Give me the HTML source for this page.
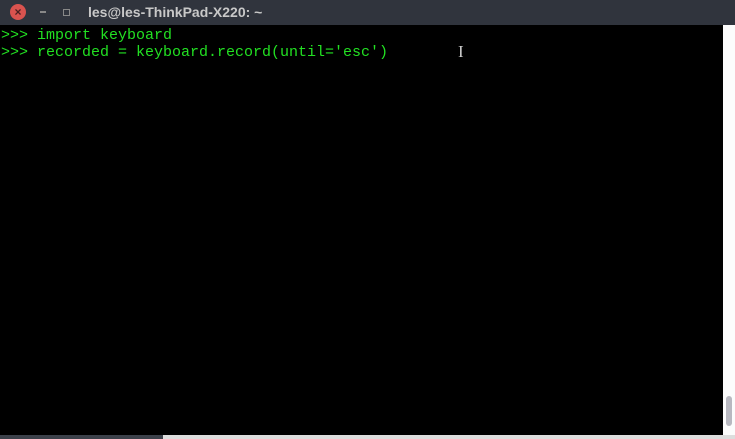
<!DOCTYPE html><html><head><style>
body{margin:0;width:735px;height:439px;background:#000;position:relative;overflow:hidden;font-family:"Liberation Sans",sans-serif}
#t{position:absolute;left:0;top:0;width:735px;height:25px;background:#30343d}
#t .x{position:absolute;left:10px;top:4px;width:16px;height:16px;border-radius:50%;background:#d9534f;color:#4a2020;font-size:12px;line-height:16px;text-align:center;font-weight:bold}
#t .m{position:absolute;left:40px;top:11px;width:6px;height:2px;background:#888}
#t .r{position:absolute;left:63px;top:9px;width:5px;height:5px;border:1px solid #888}
#t .ti{position:absolute;left:88px;top:4px;color:#c8c8c8;font-weight:bold;font-size:14px}
pre{position:absolute;left:1px;top:27px;margin:0;font-family:"Liberation Mono",monospace;font-size:15px;line-height:17px;color:#22e022}
#sb{position:absolute;left:723px;top:25px;width:12px;height:410px;background:#fcfcfc}
#th{position:absolute;left:726px;top:396px;width:6px;height:30px;border-radius:3px;background:#b8b8c0}
#b1{position:absolute;left:0;top:435px;width:163px;height:4px;background:#3c414a}
#b2{position:absolute;left:163px;top:435px;width:572px;height:4px;background:#ddd}
#cur{position:absolute;left:458px;top:42px;color:#ccc;font-size:17px;font-family:"Liberation Serif",serif}
</style></head><body>
<div id="t"><div class="x">×</div><div class="m"></div><div class="r"></div><div class="ti">les@les-ThinkPad-X220: ~</div></div>
<pre>&gt;&gt;&gt; import keyboard
&gt;&gt;&gt; recorded = keyboard.record(until='esc')</pre>
<div id="cur">I</div>
<div id="sb"></div><div id="th"></div><div id="b1"></div><div id="b2"></div>
</body></html>
